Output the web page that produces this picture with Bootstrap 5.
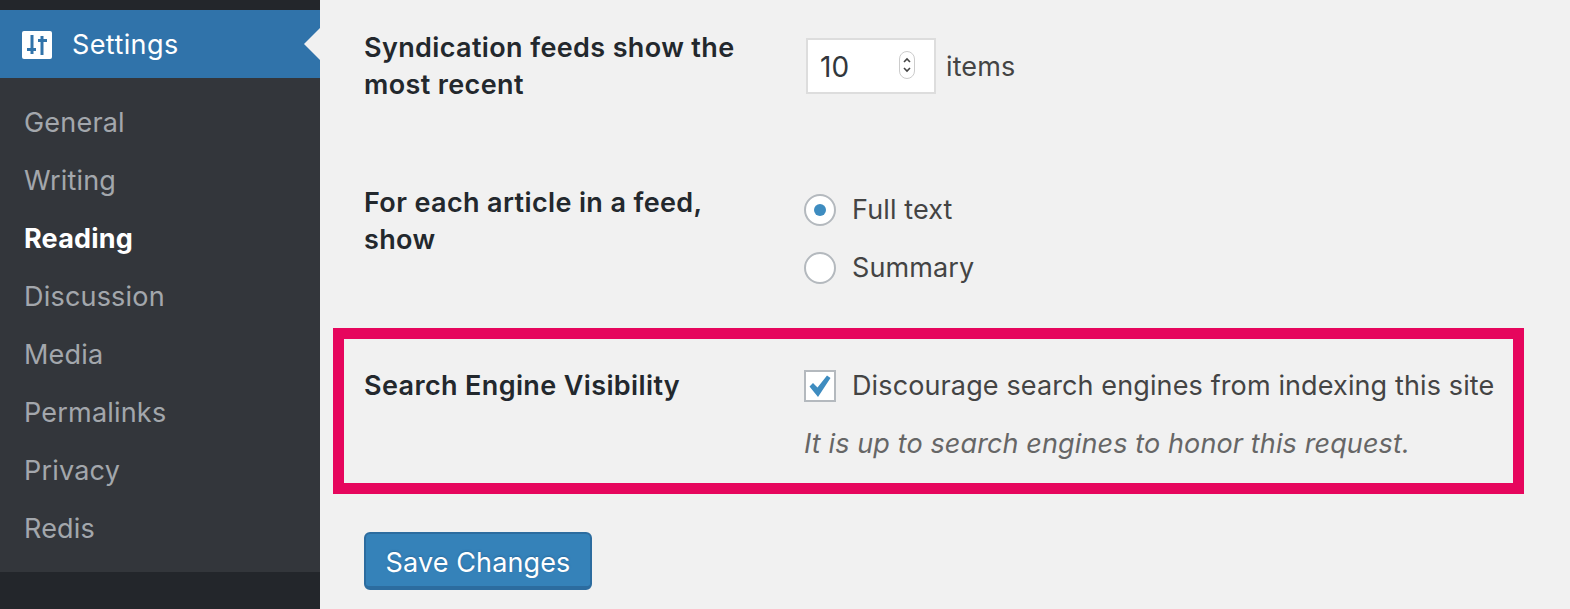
<!DOCTYPE html>
<html lang="en">
<head>
    <meta charset="UTF-8" />
    <meta name="viewport" content="width=device-width, initial-scale=1" />
    <title>Reading Settings</title>
    <link href="https://cdn.jsdelivr.net/npm/bootstrap@5.3.0/dist/css/bootstrap.min.css" rel="stylesheet" />
    <style>
        html, body {
            height: 100%;
        }
        body {
            background: #f1f1f1;
            color: #444;
            font-family: Inter, "Liberation Sans", sans-serif;
            font-size: 27px;
            letter-spacing: .12px;
            line-height: 36px;
            overflow: hidden;
        }
        .wp-shell {
            height: 609px;
        }
        .wp-side {
            width: 320px;
            background: #23262b;
            padding-top: 10px;
        }
        .wp-current {
            height: 68px;
            background: #3073aa;
            color: #fff;
            padding: 1px 0 0 22px;
            gap: 20px;
            letter-spacing: .4px;
        }
        .wp-current::after {
            content: "";
            position: absolute;
            right: 0;
            top: 50%;
            margin-top: -16px;
            border: 16px solid transparent;
            border-left-width: 0;
            border-right-color: #f1f1f1;
        }
        .wp-sub {
            background: #33363b;
            height: 494px;
            padding: 16px 0 0 24px;
            letter-spacing: .2px;
        }
        .wp-sub a {
            height: 58px;
            color: rgba(240, 245, 250, .6);
            text-decoration: none;
        }
        .wp-sub a.wp-on {
            color: #fff;
            font-weight: 700;
        }
        .wp-main {
            padding-left: 44px;
        }
        .wp-label {
            width: 440px;
            flex: none;
            padding-right: 60px;
            color: #23282d;
            font-weight: 600;
            letter-spacing: .37px;
            line-height: 37px;
        }
        .wp-row-feed {
            height: 184px;
            padding-top: 29px;
        }
        .wp-row-article {
            height: 144px;
        }
        .wp-flag {
            width: 1191px;
            height: 166px;
            margin-left: -31px;
            padding: 29px 0 0 20px;
            border: 11px solid #e6065d;
        }
        .wp-flag .wp-label {
            padding-right: 0;
            line-height: 36px;
        }
        .wp-num {
            width: 130px;
            height: 56px;
            background: #fff;
            border: 2px solid #ddd;
            padding: 2px 0 0 12px;
            color: #32373c;
            font-size: 28px;
            letter-spacing: 0;
        }
        .wp-amount {
            margin: 9px 0 0 2px;
            gap: 10px;
        }
        .wp-units {
            padding-top: 2px;
        }
        .wp-spin {
            width: 16px;
            height: 28px;
            right: 19px;
            top: 11px;
            border: 1px solid #ccc;
            border-radius: 8px;
            background: #fff;
        }
        .wp-radio {
            width: 32px;
            height: 32px;
            border: 2px solid #b4b9be;
            border-radius: 50%;
            background: #fff;
        }
        .wp-dot {
            width: 12px;
            height: 12px;
            border-radius: 50%;
            background: #3e8cc0;
        }
        .wp-check {
            width: 32px;
            height: 32px;
            border: 2px solid #b4b9be;
            background: #fff;
        }
        .wp-picks {
            margin-top: -3px;
        }
        .wp-pick {
            height: 58px;
            gap: 16px;
        }
        .wp-note {
            margin-top: 22px;
            color: #666;
            font-style: italic;
        }
        .btn.wp-save {
            display: block;
            width: 228px;
            height: 58px;
            margin-top: 38px;
            padding: 4px 0 0;
            background: #3582b9;
            border: 2px solid #2c6c9f;
            border-bottom-width: 4px;
            border-radius: 6px;
            color: #fff;
            font-size: 27px;
            letter-spacing: .12px;
            line-height: 1;
            text-shadow: 0 -1px 2px #2a6a9c;
        }
    </style>
</head>
<body>
    <div class="d-flex wp-shell">
        <nav class="wp-side flex-shrink-0">
            <div class="wp-current d-flex align-items-center position-relative">
                <svg width="30" height="28" viewBox="0 0 30 28">
                    <rect width="30" height="28" rx="2" fill="#fff" />
                    <path d="M10 4v19M20 5v19" stroke="#3073aa" stroke-width="3" />
                    <path d="M5 17h9v3h-9zM16 8h9v3h-9z" fill="#3073aa" />
                </svg>
                <span>Settings</span>
            </div>
            <div class="wp-sub d-flex flex-column">
                <a href="#" class="d-flex align-items-center">General</a>
                <a href="#" class="d-flex align-items-center">Writing</a>
                <a href="#" class="d-flex align-items-center wp-on">Reading</a>
                <a href="#" class="d-flex align-items-center">Discussion</a>
                <a href="#" class="d-flex align-items-center">Media</a>
                <a href="#" class="d-flex align-items-center">Permalinks</a>
                <a href="#" class="d-flex align-items-center">Privacy</a>
                <a href="#" class="d-flex align-items-center">Redis</a>
            </div>
        </nav>
        <main class="wp-main flex-grow-1">
            <div class="d-flex wp-row-feed">
                <div class="wp-label">Syndication feeds show the most recent</div>
                <div class="d-flex align-items-center align-self-start wp-amount">
                    <div class="wp-num position-relative d-flex align-items-center">10
                        <span class="wp-spin position-absolute d-block">
                            <svg class="d-block" width="14" height="26" viewBox="0 0 14 26" fill="none" stroke="#444" stroke-width="1.6">
                                <path d="M4 10l3-3 3 3M4 16l3 3 3-3" />
                            </svg>
                        </span>
                    </div>
                    <span class="wp-units">items</span>
                </div>
            </div>
            <div class="d-flex wp-row-article">
                <div class="wp-label">For each article in a feed, show</div>
                <div class="wp-picks">
                    <div class="d-flex align-items-center wp-pick">
                        <span class="wp-radio d-flex align-items-center justify-content-center"><span class="wp-dot"></span></span>
                        <span>Full text</span>
                    </div>
                    <div class="d-flex align-items-center wp-pick">
                        <span class="wp-radio"></span>
                        <span>Summary</span>
                    </div>
                </div>
            </div>
            <section class="wp-flag d-flex">
                <div class="wp-label">Search Engine Visibility</div>
                <div>
                    <div class="d-flex align-items-center gap-3">
                        <span class="wp-check d-block">
                            <svg class="d-block" width="28" height="28" viewBox="0 0 28 28">
                                <path d="M3.5 14.5l3.5-3.5 4.5 4.5L21 3.5l3.5 2.5L12 25z" fill="#3e8cc0" />
                            </svg>
                        </span>
                        <span>Discourage search engines from indexing this site</span>
                    </div>
                    <div class="wp-note">It is up to search engines to honor this request.</div>
                </div>
            </section>
            <button type="button" class="btn wp-save">Save Changes</button>
        </main>
    </div>
</body>
</html>
